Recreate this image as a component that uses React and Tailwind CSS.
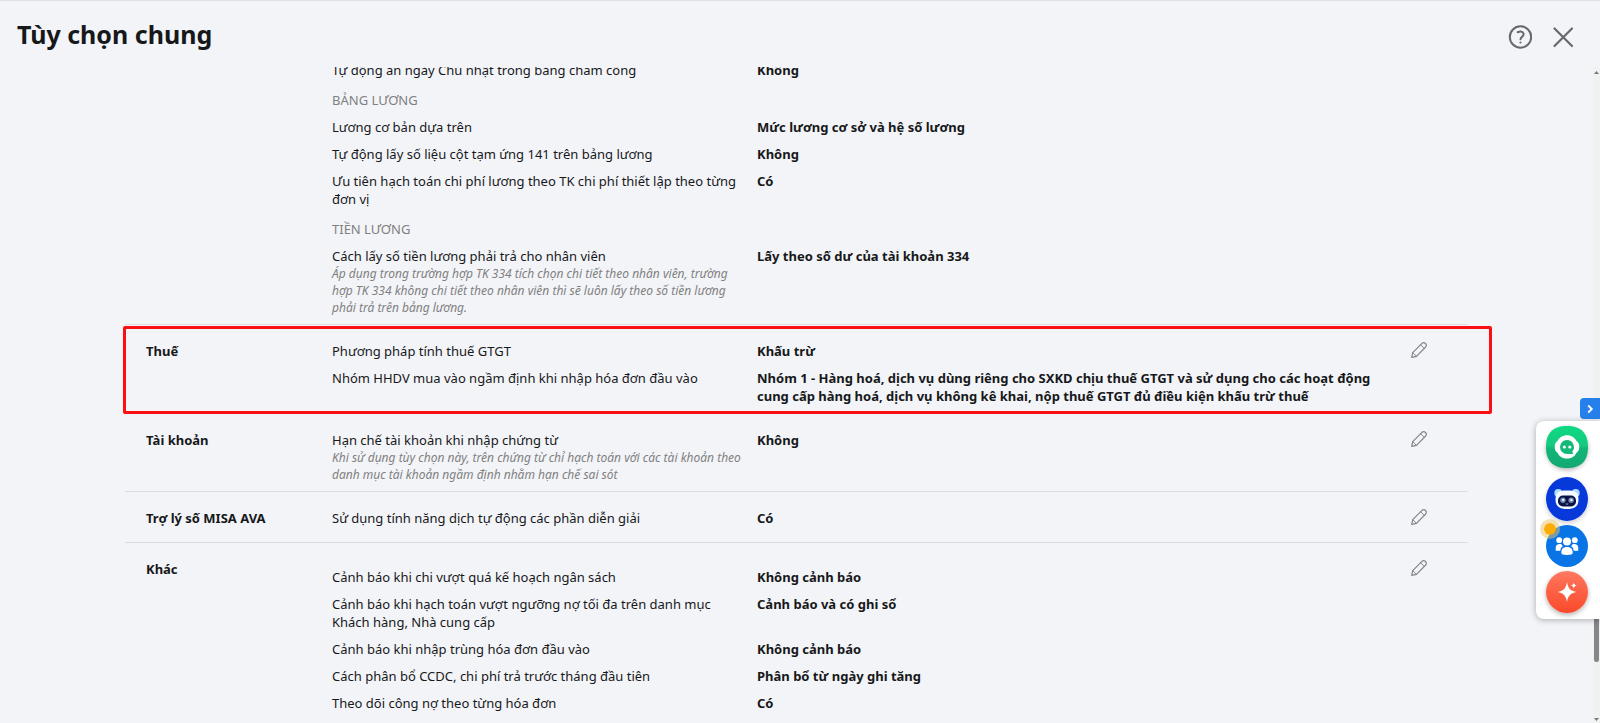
import React from "react";

const sections = [
  {
    items: [
      { label: "Tự động ẩn ngày Chủ nhật trong bảng chấm công", value: "Không" },
      { heading: "BẢNG LƯƠNG" },
      { label: "Lương cơ bản dựa trên", value: "Mức lương cơ sở và hệ số lương" },
      { label: "Tự động lấy số liệu cột tạm ứng 141 trên bảng lương", value: "Không" },
      { label: "Ưu tiên hạch toán chi phí lương theo TK chi phí thiết lập theo từng đơn vị", value: "Có" },
      { heading: "TIỀN LƯƠNG" },
      {
        label: "Cách lấy số tiền lương phải trả cho nhân viên",
        note: "Áp dụng trong trường hợp TK 334 tích chọn chi tiết theo nhân viên, trường hợp TK 334 không chi tiết theo nhân viên thì sẽ luôn lấy theo số tiền lương phải trả trên bảng lương.",
        value: "Lấy theo số dư của tài khoản 334",
      },
    ],
  },
  {
    title: "Thuế",
    highlighted: true,
    items: [
      { label: "Phương pháp tính thuế GTGT", value: "Khấu trừ" },
      {
        label: "Nhóm HHDV mua vào ngầm định khi nhập hóa đơn đầu vào",
        value:
          "Nhóm 1 - Hàng hoá, dịch vụ dùng riêng cho SXKD chịu thuế GTGT và sử dụng cho các hoạt động cung cấp hàng hoá, dịch vụ không kê khai, nộp thuế GTGT đủ điều kiện khấu trừ thuế",
      },
    ],
  },
  {
    title: "Tài khoản",
    items: [
      {
        label: "Hạn chế tài khoản khi nhập chứng từ",
        note: "Khi sử dụng tùy chọn này, trên chứng từ chỉ hạch toán với các tài khoản theo danh mục tài khoản ngầm định nhằm hạn chế sai sót",
        value: "Không",
      },
    ],
  },
  {
    title: "Trợ lý số MISA AVA",
    items: [{ label: "Sử dụng tính năng dịch tự động các phần diễn giải", value: "Có" }],
  },
  {
    title: "Khác",
    inset: true,
    items: [
      { label: "Cảnh báo khi chi vượt quá kế hoạch ngân sách", value: "Không cảnh báo" },
      { label: "Cảnh báo khi hạch toán vượt ngưỡng nợ tối đa trên danh mục Khách hàng, Nhà cung cấp", value: "Cảnh báo và có ghi sổ" },
      { label: "Cảnh báo khi nhập trùng hóa đơn đầu vào", value: "Không cảnh báo" },
      { label: "Cách phân bổ CCDC, chi phí trả trước tháng đầu tiên", value: "Phân bổ từ ngày ghi tăng" },
      { label: "Theo dõi công nợ theo từng hóa đơn", value: "Có" },
    ],
  },
];

function PencilIcon() {
  return (
    <svg viewBox="0 0 16 16" className="size-4" fill="none" stroke="#84868c" strokeWidth="1.2" strokeLinejoin="round" strokeLinecap="round" aria-hidden="true">
      <path d="M.7 15.3 1.7 10.6 11 1.3Q12.8-.1 14.5 1.5 16.1 3.2 14.7 5L5.4 14.3Z" />
      <path d="M9.6 2.7 13.3 6.4M1.7 10.6 5.4 14.3" strokeWidth="1" />
    </svg>
  );
}

function Row({ item }) {
  if (item.heading) {
    return <h3 className="mt-[3px] text-[#808080]">{item.heading}</h3>;
  }
  return (
    <div className="flex">
      <dt className="w-[425px] shrink-0 pr-[10px]">
        {item.label}
        {item.note && <p className="text-xs leading-[17px] text-[#808080] italic">{item.note}</p>}
      </dt>
      <dd className="flex-1 font-bold">{item.value}</dd>
    </div>
  );
}

function Section({ section, first }) {
  return (
    <section className={first ? "relative flex pb-2" : "relative flex min-h-[51px] border-t border-[#dcdde1] pt-[17px] pb-2"}>
      <h2 className="w-[207px] shrink-0 pl-[21px] font-bold">{section.title}</h2>
      <dl className={section.inset ? "flex flex-1 flex-col gap-[9px] pt-2" : "flex flex-1 flex-col gap-[9px]"}>
        {section.items.map((item) => (
          <Row key={item.label || item.heading} item={item} />
        ))}
      </dl>
      <div className="w-[82px] shrink-0 pl-[25px]">
        {section.title && (
          <button type="button" aria-label={"Sửa " + section.title} className="block cursor-pointer">
            <PencilIcon />
          </button>
        )}
      </div>
      {section.highlighted && (
        <div className="pointer-events-none absolute top-px -right-6 -bottom-px -left-0.5 z-10 rounded-xs border-3 border-[#fb0f12]" />
      )}
    </section>
  );
}

function ChatIcon() {
  return (
    <svg viewBox="0 0 42 42" className="size-full" aria-hidden="true">
      <defs>
        <linearGradient id="chat" x1="0" y1="0" x2="0" y2="1">
          <stop offset="0" stopColor="#0fd984" />
          <stop offset=".48" stopColor="#14c97e" />
          <stop offset=".52" stopColor="#12b777" />
          <stop offset="1" stopColor="#13a873" />
        </linearGradient>
      </defs>
      <path d="M21 0C36 0 42 8 42 21S36 42 21 42 0 34 0 21 6 0 21 0Z" fill="url(#chat)" />
      <path d="M21 9.300c4.400 0 7.800 2.200 9.500 5.800 1.800 1 2.800 3.200 2.800 5.800s-1 4.800-2.800 5.800c-1.700 3.600-5.100 5.800-9.500 5.800s-7.800-2.200-9.500-5.800c-1.800-1-2.800-3.200-2.800-5.800s1-4.800 2.800-5.800c1.700-3.600 5.100-5.800 9.500-5.800Z" fill="#fff" />
      <path d="M21 14a7 7 0 1 0 0 14h6.200l-1-2.400A7 7 0 0 0 21 14Z" fill="#13b978" />
      <circle cx="18.300" cy="21" r="1.600" fill="#fff" />
      <circle cx="23.800" cy="21" r="1.600" fill="#fff" />
    </svg>
  );
}

function BearIcon() {
  return (
    <svg viewBox="0 0 42 44" className="size-full" aria-hidden="true">
      <ellipse cx="21" cy="22" rx="21" ry="22" fill="#0638da" />
      <circle cx="12.300" cy="16" r="4" fill="#a9dcff" />
      <circle cx="29.700" cy="16" r="4" fill="#a9dcff" />
      <path d="M21 13.500c8 0 11.500 1.500 11.500 9S28 32 21 32 9.500 30 9.500 22.500s3.500-9 11.500-9Z" fill="#f4faff" />
      <rect x="12" y="18.500" width="18" height="11" rx="5" fill="#0a1446" />
      <circle cx="16.900" cy="23.300" r="2.700" fill="#7589b5" />
      <circle cx="25.100" cy="23.300" r="2.700" fill="#7589b5" />
      <circle cx="17.200" cy="22.900" r="1.200" fill="#e9f2ff" />
      <circle cx="25.400" cy="22.900" r="1.200" fill="#e9f2ff" />
      <path d="M19.800 26.700q1.200 1.200 2.400 0" fill="none" stroke="#b9c8e8" strokeWidth=".8" />
    </svg>
  );
}

function PeopleIcon() {
  return (
    <svg viewBox="0 0 42 42" className="size-full" aria-hidden="true">
      <circle cx="21" cy="21" r="21" fill="#0874e6" />
      <g fill="#fff">
        <circle cx="13.200" cy="15.200" r="2.900" />
        <circle cx="28.800" cy="15.200" r="2.900" />
        <path d="M9.700 25.200v-2.300c0-2.500 1.600-3.900 4-3.900h1.500c.8 1.200 1 1.500 1.700 2.200-1.700 1-2.300 2.400-2.600 4.500h-4q-.6 0-.6-.5ZM32.300 25.200v-2.300c0-2.500-1.600-3.900-4-3.900h-1.500c-.8 1.200-1 1.500-1.700 2.200 1.700 1 2.300 2.400 2.600 4.500h4q.6 0 .6-.5Z" />
        <circle cx="21" cy="16.600" r="4" />
        <path d="M15.300 28c0-4 1.800-6 5.700-6s5.700 2 5.700 6c0 1.300-1.700 1.900-5.700 1.900s-5.700-.6-5.700-1.900Z" />
      </g>
    </svg>
  );
}

function SparkIcon() {
  return (
    <svg viewBox="0 0 42 42" className="size-full" aria-hidden="true">
      <defs>
        <linearGradient id="spark" x1="0" y1="0" x2="0" y2="1">
          <stop offset="0" stopColor="#ff7a62" />
          <stop offset=".3" stopColor="#fd694e" />
          <stop offset="1" stopColor="#fb4a2b" />
        </linearGradient>
      </defs>
      <circle cx="21" cy="21" r="21" fill="url(#spark)" />
      <path d="M21 11c1.200 6.500 3 8.500 9.500 10-6.500 1.500-8.300 3.500-9.500 10-1.200-6.500-3-8.500-9.500-10 6.500-1.500 8.300-3.500 9.500-10Z" fill="#fff" />
      <path d="M27.800 11.500c.5 2 1 2.600 3 3.100-2 .5-2.500 1.100-3 3.100-.5-2-1-2.600-3-3.100 2-.5 2.500-1.100 3-3.100Z" fill="#fff" />
    </svg>
  );
}

function Dock() {
  return (
    <aside className="fixed top-[398px] right-0 z-20 flex flex-col items-end gap-0.5">
      <button type="button" aria-label="Thu gọn" className="flex h-[21px] w-5 cursor-pointer items-center justify-center rounded-l-sm bg-[#2680eb]">
        <svg viewBox="0 0 10 10" className="size-2.5" fill="none" stroke="#fff" strokeWidth="1.8" aria-hidden="true">
          <path d="M3.200 1.500 6.800 5 3.200 8.500" />
        </svg>
      </button>
      <div className="flex w-16 flex-col gap-1 rounded-l-lg bg-white pt-[5px] pb-1.5 pl-2.5 shadow-[0_1px_6px_rgba(0,0,0,0.3)]">
        <button type="button" aria-label="Trò chuyện" className="mb-[5px] size-[42px] cursor-pointer rounded-full shadow-[0_2px_5px_rgba(0,0,0,0.3)]">
          <ChatIcon />
        </button>
        <button type="button" aria-label="Trợ lý AVA" className="h-11 w-[42px] cursor-pointer rounded-full shadow-[0_2px_5px_rgba(0,0,0,0.2)]">
          <BearIcon />
        </button>
        <button type="button" aria-label="Cộng đồng" className="relative size-[42px] cursor-pointer">
          <PeopleIcon />
          <span className="absolute -top-[6px] -left-[6px] size-5 rounded-full border-4 border-[#e8c36a]/50 bg-[#fdab05] bg-clip-padding" />
        </button>
        <button type="button" aria-label="Gợi ý thông minh" className="size-[42px] cursor-pointer rounded-full shadow-[0_2px_5px_rgba(0,0,0,0.3)]">
          <SparkIcon />
        </button>
      </div>
    </aside>
  );
}

function ScrollRail() {
  return (
    <div className="flex w-[7px] shrink-0 flex-col items-center bg-[#f1f1f2] pt-1 pb-0.5" aria-hidden="true">
      <svg viewBox="0 0 5 3" className="h-[3px] w-[5px]"><path d="M0 3 2.500 0 5 3Z" fill="#77787a" /></svg>
      <div className="flex-1" />
      <div className="h-16 w-[5px] rounded-full bg-[#858688]" />
      <div className="h-14 shrink-0" />
      <svg viewBox="0 0 5 3" className="h-[3px] w-[5px]"><path d="M0 0 2.500 3 5 0Z" fill="#77787a" /></svg>
    </div>
  );
}

export default function App() {
  return (
    <div className="flex h-screen flex-col overflow-hidden border-t border-[#dfe0e4] bg-[#f3f4f8] font-['Noto_Sans',sans-serif] text-[13px] leading-[18px] text-[#17181a]">
      <header className="flex h-[66px] shrink-0 items-center justify-between pr-[26px] pl-[17px]">
        <h1 className="text-[25px] leading-8 font-bold">Tùy chọn chung</h1>
        <div className="flex items-center gap-5 pt-1.5">
          <button type="button" aria-label="Trợ giúp" className="cursor-pointer">
            <svg viewBox="0 0 24 24" className="size-6" fill="none" stroke="#66686e" strokeWidth="2" strokeLinecap="round" aria-hidden="true">
              <circle cx="12.500" cy="12" r="10.700" />
              <path d="M9.600 7.200q3.200-1.300 5 0c1.600 1.400 1.200 3.200-.4 4.400-1.200.9-1.700 1.400-1.700 2.600" />
              <circle cx="12.500" cy="17.500" r=".5" fill="#66686e" strokeWidth="1.200" />
            </svg>
          </button>
          <button type="button" aria-label="Đóng" className="cursor-pointer">
            <svg viewBox="0 0 22 22" className="size-[22px]" fill="none" stroke="#66686e" strokeWidth="2.200" strokeLinecap="round" aria-hidden="true">
              <path d="M2.500 2.500 20 20M20 2.500 2.500 20" />
            </svg>
          </button>
        </div>
      </header>
      <div className="flex min-h-0 flex-1">
        <main className="min-w-0 flex-1 overflow-hidden px-[125px]">
          <div className="-mt-1.5">
            {sections.map((section, index) => (
              <Section key={index} section={section} first={index === 0} />
            ))}
          </div>
        </main>
        <ScrollRail />
      </div>
      <Dock />
    </div>
  );
}
